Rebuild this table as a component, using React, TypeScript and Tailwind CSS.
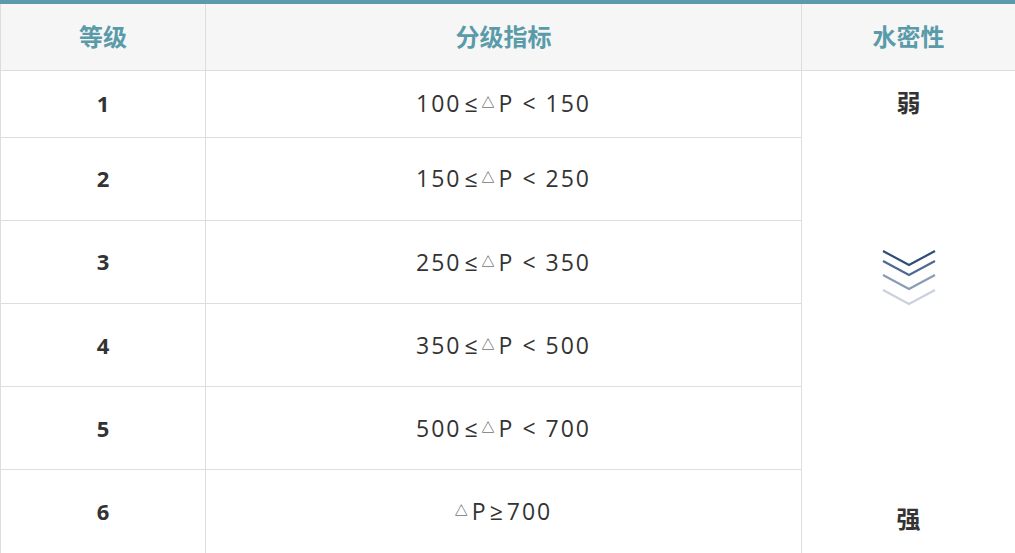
import React from "react";

const rows = [
  { lv: "1", a: "100", op: "≤", b: "P < 150", h: "h-[67px]" },
  { lv: "2", a: "150", op: "≤", b: "P < 250", h: "h-[83px]" },
  { lv: "3", a: "250", op: "≤", b: "P < 350", h: "h-[83px]" },
  { lv: "4", a: "350", op: "≤", b: "P < 500", h: "h-[83px]" },
  { lv: "5", a: "500", op: "≤", b: "P < 700", h: "h-[83px]" },
  { lv: "6", a: "", op: "", b: "", h: "h-[83px]" },
];

function Chevrons() {
  const ys = [0, 10, 24, 39];
  const colors = ["#2f4d78", "#4f6a91", "#8a9bb5", "#c9d1dd"];
  return (
    <svg width="54" height="58" viewBox="0 0 54 58" fill="none">
      {ys.map((y, i) => (
        <polyline
          key={i}
          points={`1,${y + 2} 27,${y + 16} 53,${y + 2}`}
          stroke={colors[i]}
          strokeWidth="2.2"
        />
      ))}
    </svg>
  );
}

export default function App() {
  const font = { fontFamily: '"Open Sans", "Noto Sans CJK SC", sans-serif' };
  return (
    <div className="w-[1015px] bg-white border-t-4 border-[#5a9baa]" style={font}>
      <table className="w-[1015px] border-collapse table-fixed">
        <colgroup>
          <col className="w-[205px]" />
          <col className="w-[596px]" />
          <col className="w-[214px]" />
        </colgroup>
        <thead>
          <tr className="h-[66px] bg-[#f6f6f6]">
            <th className="border border-t-0 border-[#dddddd] text-[24px] font-bold text-[#5a9baa]">等级</th>
            <th className="border border-t-0 border-[#dddddd] text-[24px] font-bold text-[#5a9baa]">分级指标</th>
            <th className="border border-t-0 border-[#dddddd] text-[24px] font-bold text-[#5a9baa]">水密性</th>
          </tr>
        </thead>
        <tbody>
          {rows.map((r, i) => (
            <tr key={r.lv} className={r.h}>
              <td className="border border-[#dddddd] text-center text-[22px] font-bold text-[#333333]">{r.lv}</td>
              <td className="border border-[#dddddd] text-center text-[23px] text-[#333333] tracking-[2px] whitespace-pre">
                {i < 5 ? (
                  <>
                    {r.a}
                    <span className="ml-[3px]">{r.op}</span>
                    <span className="text-[13px] align-[5px] tracking-[4px] ml-[2px]">△</span>
                    {r.b}
                  </>
                ) : (
                  <>
                    <span className="text-[13px] align-[5px] tracking-[4px]">△</span>
                    P<span className="mx-[2px]">≥</span>700
                  </>
                )}
              </td>
              {i === 0 && (
                <td rowSpan={6} className="border border-[#dddddd] align-top p-0">
                  <div className="flex flex-col items-center h-[482px] text-[24px] font-bold text-[#333333]">
                    <div className="pt-[16px] leading-[32px]">弱</div>
                    <div className="mt-[130px]"><Chevrons /></div>
                    <div className="mt-auto pb-[18px] leading-[32px]">强</div>
                  </div>
                </td>
              )}
            </tr>
          ))}
        </tbody>
      </table>
    </div>
  );
}
